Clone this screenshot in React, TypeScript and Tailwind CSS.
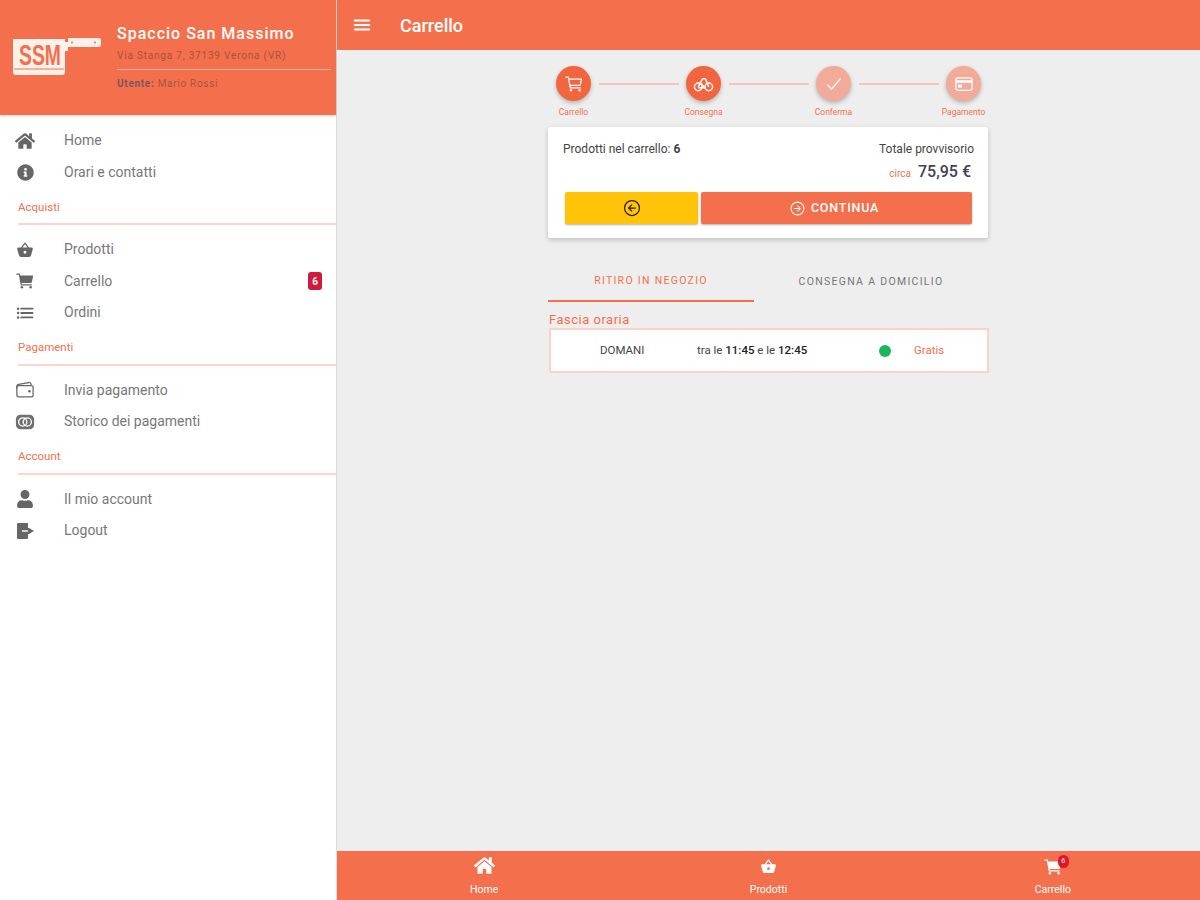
import { ReactNode } from 'react'
import { FaHome, FaInfoCircle, FaUser } from 'react-icons/fa'
import { IoBasket, IoCart, IoList, IoWalletOutline, IoMenu, IoCartOutline, IoCheckmark, IoCardOutline, IoArrowBackCircleOutline, IoArrowForwardCircleOutline } from 'react-icons/io5'

const font = { fontFamily: 'Roboto, "Liberation Sans", sans-serif' }

function CashIcon() {
  return (
    <svg viewBox="0 0 22 18" className="w-[22px] h-[18px]" fill="none">
      <rect x="1" y="1" width="20" height="16" rx="5" fill="#6f6f6f" />
      <circle cx="8.5" cy="9" r="4.5" stroke="#fff" strokeWidth="1.5" />
      <circle cx="13.5" cy="9" r="4.5" stroke="#fff" strokeWidth="1.5" />
    </svg>
  )
}

function LogoutIcon() {
  return (
    <svg viewBox="0 0 20 18" className="w-[20px] h-[18px]">
      <path d="M2 2 Q2 1 3 1 H12 Q13 1 13 2 V6 H14 L19 9 L14 12 H13 V16 Q13 17 12 17 H3 Q2 17 2 16 Z" fill="#666666" />
      <path d="M7 9 H13" stroke="#fff" strokeWidth="1.4" />
    </svg>
  )
}

function BikeIcon() {
  return (
    <svg viewBox="0 0 22 18" className="w-[21px] h-[18px]" fill="none" stroke="currentColor" strokeWidth="1.5">
      <circle cx="5.5" cy="12" r="4" />
      <circle cx="16.5" cy="12" r="4" />
      <path d="M5.5 12 L10 3.5 H13 L16.5 12 M8 8 L12.5 13 H5.5" strokeLinejoin="round" />
    </svg>
  )
}

function Logo() {
  return (
    <svg viewBox="0 0 90 42" className="w-[90px] h-[42px]">
      <path d="M1 2 H53 V5 H56 V1 H87 Q89 1 89 3 V8 Q89 10 87 10 H56 V14 H53 V35 Q53 38 50 38 H4 Q1 38 1 35 Z" fill="#fdf1ea" />
      <circle cx="60" cy="5.5" r="1" fill="#f4704c" />
      <circle cx="83" cy="5.5" r="1" fill="#f4704c" />
      <path d="M2 32 H52" stroke="#f4704c" strokeWidth="1" />
      <text x="7" y="28" fill="#f4704c" fontSize="29" fontWeight="700" textLength="42" lengthAdjust="spacingAndGlyphs" style={{ fontFamily: '"Liberation Sans", sans-serif' }}>SSM</text>
    </svg>
  )
}

function NavItem({ icon, label, badge }: { icon: ReactNode; label: string; badge?: string }) {
  return (
    <div className="h-[31.5px] flex items-center pl-[15px] pr-[14px] text-[#777777] text-[14px]">
      <div className="w-[20px] flex justify-center mr-[29px] text-[#666666]">{icon}</div>
      <span className="flex-1">{label}</span>
      {badge && (
        <span className="bg-[#d11a3e] text-white text-[10px] font-bold rounded-[3px] w-[14px] h-[18px] flex items-center justify-center">{badge}</span>
      )}
    </div>
  )
}

function SectionTitle({ label }: { label: string }) {
  return (
    <div className="ml-[18px] h-[37px] mb-[9px] pt-[4px] border-b-2 border-[#fdd5ca] flex items-center text-[11.5px] text-[#f4704c]">
      {label}
    </div>
  )
}

function Sidebar() {
  return (
    <aside className="w-[337px] shrink-0 bg-white border-r border-[#dddddd] flex flex-col">
      <div className="h-[115px] bg-[#f4704c] flex shadow-[0_1px_3px_rgba(0,0,0,0.2)]">
        <div className="w-[117px] pl-[12px] pt-[37px] shrink-0">
          <Logo />
        </div>
        <div className="flex-1 pr-[5px] pt-[24px]">
          <div className="text-[16px] font-medium text-white leading-[20px] tracking-[1px]">Spaccio San Massimo</div>
          <div className="text-[10px] text-[#a8533f] leading-[12px] tracking-[0.8px] mt-[6px] pb-[7px] border-b border-[#f9b29f]">Via Stanga 7, 37139 Verona (VR)</div>
          <div className="text-[10px] text-[#a8533f] leading-[12px] tracking-[0.7px] mt-[8px]"><span className="font-bold text-[#7a5560]">Utente:</span> Mario Rossi</div>
        </div>
      </div>
      <div className="pt-[10px]">
        <NavItem icon={<FaHome size={20} />} label="Home" />
        <NavItem icon={<FaInfoCircle size={17} />} label="Orari e contatti" />
        <SectionTitle label="Acquisti" />
        <NavItem icon={<IoBasket size={20} />} label="Prodotti" />
        <NavItem icon={<IoCart size={20} />} label="Carrello" badge="6" />
        <NavItem icon={<IoList size={20} />} label="Ordini" />
        <SectionTitle label="Pagamenti" />
        <NavItem icon={<IoWalletOutline size={22} />} label="Invia pagamento" />
        <NavItem icon={<CashIcon />} label="Storico dei pagamenti" />
        <SectionTitle label="Account" />
        <NavItem icon={<FaUser size={18} />} label="Il mio account" />
        <NavItem icon={<LogoutIcon />} label="Logout" />
      </div>
    </aside>
  )
}

function Step({ icon, label, done }: { icon: ReactNode; label: string; done: boolean }) {
  return (
    <div className="relative w-[35px] h-[35px] shrink-0">
      <div className={`w-[35px] h-[35px] rounded-full flex items-center justify-center text-white shadow-[0_2px_4px_rgba(0,0,0,0.25)] ${done ? 'bg-[#f2653f]' : 'bg-[#f2ab98]'}`}>
        {icon}
      </div>
      <div className="absolute top-[41px] left-1/2 -translate-x-1/2 text-[8.5px] text-[#f4704c] whitespace-nowrap leading-[10px]">{label}</div>
    </div>
  )
}

function Line() {
  return <div className="w-[80px] h-[2px] bg-[#f7c4b6] mx-auto" />
}

export default function App() {
  return (
    <div className="w-[1200px] h-[900px] flex overflow-hidden bg-white" style={font}>
      <Sidebar />
      <main className="flex-1 flex flex-col bg-[#eeeeee]">
        <header className="h-[50px] shrink-0 bg-[#f4704c] flex items-center text-white">
          <IoMenu size={22} className="ml-[14px]" />
          <span className="ml-[27px] text-[18px] font-medium">Carrello</span>
        </header>

        <div className="flex-1 flex flex-col w-[440px] ml-[211px] pt-[16px]">
          {/* Stepper */}
          <div className="flex items-center pl-[8px] pr-[7px] h-[35px]">
            <Step icon={<IoCartOutline size={20} />} label="Carrello" done />
            <div className="flex-1"><Line /></div>
            <Step icon={<BikeIcon />} label="Consegna" done />
            <div className="flex-1"><Line /></div>
            <Step icon={<IoCheckmark size={20} />} label="Conferma" done={false} />
            <div className="flex-1"><Line /></div>
            <Step icon={<IoCardOutline size={20} />} label="Pagamento" done={false} />
          </div>

          {/* Summary card */}
          <div className="mt-[26px] h-[111px] bg-white rounded-[2px] shadow-[0_2px_5px_rgba(0,0,0,0.2)] pl-[15px] pr-[14px] pt-[15px]">
            <div className="flex justify-between text-[12px] leading-[14px] text-[#444444]">
              <span>Prodotti nel carrello: <b className="font-bold">6</b></span>
              <span>Totale provvisorio</span>
            </div>
            <div className="flex justify-end items-baseline mt-[7px] pr-[3px] leading-[18px]">
              <span className="text-[10px] text-[#f4704c] mr-[7px]">circa</span>
              <span className="text-[16px] font-medium text-[#3f4450]">75,95 €</span>
            </div>
            <div className="flex gap-[3px] mt-[9px] ml-[2px] mr-[2px]">
              <button className="w-[133px] h-[32px] bg-[#ffc409] rounded-[2px] shadow-[0_1px_2px_rgba(0,0,0,0.3)] flex items-center justify-center text-[#2b2300]">
                <IoArrowBackCircleOutline size={20} />
              </button>
              <button className="flex-1 h-[32px] bg-[#f4704c] rounded-[2px] shadow-[0_1px_2px_rgba(0,0,0,0.3)] flex items-center justify-center gap-[5px] pr-[5px] text-white text-[12.5px] font-medium tracking-[0.8px]">
                <IoArrowForwardCircleOutline size={17} />
                CONTINUA
              </button>
            </div>
          </div>

          {/* Tabs */}
          <div className="flex mt-[24px] h-[40px] text-[10.5px] tracking-[1.3px] uppercase">
            <div className="w-[206px] flex items-center justify-center text-[#f4704c] border-b-2 border-[#f4704c]">Ritiro in negozio</div>
            <div className="flex-1 flex items-center justify-center text-[#777777]">Consegna a domicilio</div>
          </div>

          <div className="mt-[10px] text-[13px] leading-[16px] tracking-[0.5px] text-[#f4704c] pl-[1px]">Fascia oraria</div>
          <div className="ml-[1px] -mr-[1px] h-[45px] bg-white border-2 border-[#fbd2c6] flex items-center text-[11.5px] text-[#444444]">
            <span className="w-[146px] pl-[49px] shrink-0">DOMANI</span>
            <span className="w-[182px] shrink-0">tra le <b className="font-medium text-[#222222]">11:45</b> e le <b className="font-medium text-[#222222]">12:45</b></span>
            <span className="w-[12px] h-[12px] rounded-full bg-[#1bb55c] shrink-0" />
            <span className="ml-[23px] text-[#f4704c]">Gratis</span>
          </div>
        </div>

        {/* Bottom tabs */}
        <footer className="h-[49px] shrink-0 bg-[#f4704c] grid grid-cols-3 px-[5px] text-white text-[10.5px]">
          <div className="flex flex-col items-center pt-[4px]">
            <FaHome size={21} />
            <span className="mt-[8px] leading-[12px]">Home</span>
          </div>
          <div className="flex flex-col items-center pt-[6px]">
            <IoBasket size={19} />
            <span className="mt-[8px] leading-[12px]">Prodotti</span>
          </div>
          <div className="flex flex-col items-center pt-[6px]">
            <div className="relative">
              <IoCart size={20} />
              <span className="absolute -top-[2px] -right-[6px] w-[11px] h-[13px] rounded-full bg-[#e0162b] text-[7px] leading-[13px] text-center">6</span>
            </div>
            <span className="mt-[7px] leading-[12px]">Carrello</span>
          </div>
        </footer>
      </main>
    </div>
  )
}
